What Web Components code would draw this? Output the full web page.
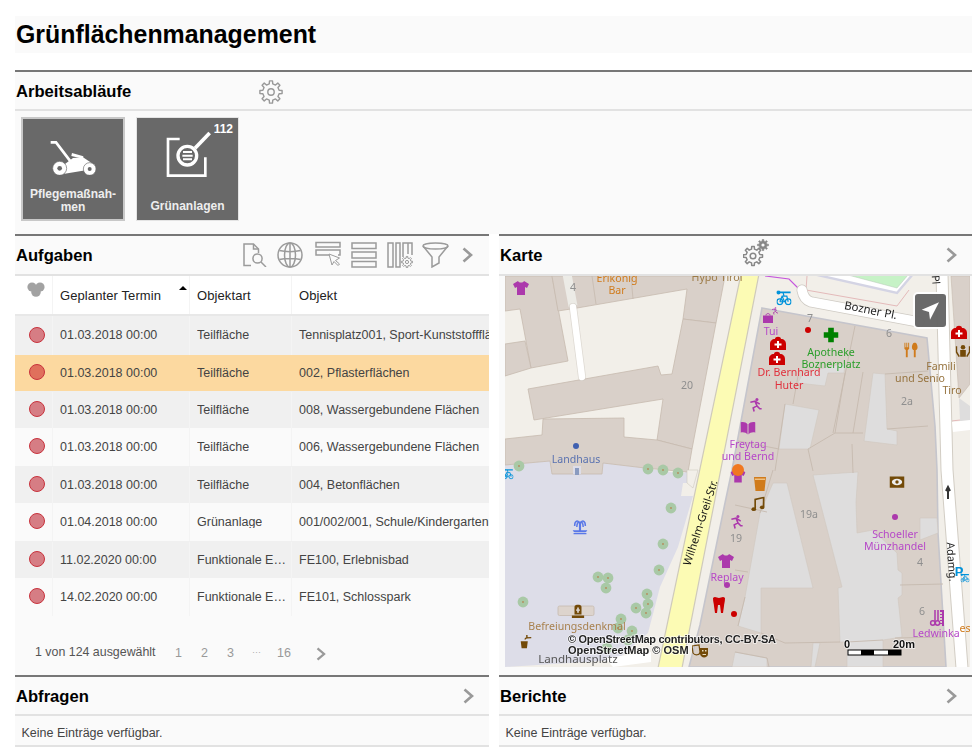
<!DOCTYPE html>
<html lang="de">
<head>
<meta charset="utf-8">
<title>Grünflächenmanagement</title>
<style>
html,body{margin:0;padding:0;background:#fff;font-family:"Liberation Sans",Arial,sans-serif}
body{width:976px;height:756px;overflow:hidden}
</style>
</head>
<body>
<gf-app></gf-app>
<script>
function gear(cx,cy,ro,ri,n){
  var p=[],step=Math.PI*2/n;
  for(var i=0;i<n;i++){
    var a=i*step-Math.PI/2;
    var w=step*.17,g=step*.27;
    [[ri,a-g],[ro,a-w],[ro,a+w],[ri,a+g]].forEach(function(q){
      p.push((cx+q[0]*Math.cos(q[1])).toFixed(2)+' '+(cy+q[0]*Math.sin(q[1])).toFixed(2));
    });
  }
  return 'M'+p.join('L')+'Z';
}
function def(name,css,html,init){
  customElements.define(name,class extends HTMLElement{
    connectedCallback(){
      if(this.shadowRoot)return;
      var r=this.attachShadow({mode:'open'});
      var h=typeof html==='function'?html(this):html;
      r.innerHTML='<style>'+css+'</style>'+h;
      if(init)init(r,this);
    }
  });
}
var CHEV='<svg width="11" height="16" viewBox="0 0 11 16"><path d="M1.5 1.5 9 8 1.5 14.5" fill="none" stroke="#999" stroke-width="2.6"/></svg>';

def('gf-title',
 ':host{display:block;height:37px;margin:16px 4px 17px 15px;background:#fafafa}h1{margin:0;padding-left:1px;font:bold 24.9px/37px "Liberation Sans",sans-serif;color:#000}',
 '<h1><slot></slot></h1>');

def('gf-panel',
 ':host{display:block;border-top:2px solid #777;background:#fafafa;box-sizing:border-box}'+
 'header{display:flex;align-items:center;box-sizing:content-box;height:var(--head,37px);border-bottom:2px solid #e2e2e2}'+
 'h2{margin:0;flex:none;box-sizing:border-box;padding:3px 0 0 1px;width:var(--tw,244px);font:bold 16.6px/1 "Liberation Sans",sans-serif;color:#000}'+
 '.a{display:flex;flex:1;align-items:center;height:100%}',
 function(el){return '<header><h2>'+el.getAttribute('heading')+'</h2><div class="a"><slot name="actions"></slot></div></header><slot></slot>';});

def('gf-chevron',':host{display:block;margin-left:auto;margin-right:15px;height:16px;line-height:0}',CHEV);

def('gf-gear',':host{display:block;line-height:0}',function(){
  return '<svg width="26" height="26" viewBox="0 0 26 26"><path d="'+gear(12,14,11.2,8.3,8)+'" fill="none" stroke="#999" stroke-width="1.4" stroke-linejoin="round"/><circle cx="12" cy="14" r="3.2" fill="none" stroke="#999" stroke-width="1.4"/></svg>';});

def('gf-gear2',':host{display:block;line-height:0;margin-top:-5px}',function(){
  return '<svg width="28" height="28" viewBox="0 0 28 28"><path d="'+gear(10,17,9.6,7,8)+'" fill="none" stroke="#888" stroke-width="1.5" stroke-linejoin="round"/><circle cx="10" cy="17" r="2.8" fill="none" stroke="#888" stroke-width="1.5"/><path d="'+gear(20,6,5.6,4,8)+'" fill="#888" stroke="#888" stroke-width=".6" stroke-linejoin="round"/><circle cx="20" cy="6" r="1.6" fill="#fafafa"/></svg>';});

def('gf-tile',
 ':host{display:flex;position:relative;flex:none;flex-direction:column;align-items:center;box-sizing:border-box;width:104px;height:104px;background:#696969;border:2px solid #c8c8c8;color:#eee;font:bold 12px/13px "Liberation Sans",sans-serif;text-align:center}'+
 '.i{height:65px;display:flex;align-items:flex-end;justify-content:center;line-height:0}'+
 '.t{margin-top:4px;height:26px;display:flex;flex-direction:column;justify-content:flex-end;width:100%}'+
 '.b{position:absolute;right:5px;top:4px;color:#fff;font:bold 12px/14px "Liberation Sans",sans-serif}',
 function(el){var b=el.getAttribute('badge');return '<div class="i"><slot name="icon"></slot></div><div class="t"><slot></slot></div>'+(b?'<div class="b">'+b+'</div>':'');});

def('gf-tiles',':host{display:flex;gap:11px;padding:6px 0 0 6px;height:117px;box-sizing:border-box}','<slot></slot>');

def('gf-tool-icons',':host{display:flex;flex:1;align-items:center;height:24px}svg{display:block;flex:none;fill:none;stroke:#9b9b9b;stroke-width:1.5}.c{margin-left:auto;margin-right:16px;stroke:#999;stroke-width:2.6;margin-top:0}',
 function(){return ''+
 '<svg width="24" height="24" viewBox="0 0 24 24" style="margin-right:11px"><path d="M8 22.5H1V1H10.5L15.5 6V10"/><path d="M10.5 1V6H15.5"/><circle cx="14.5" cy="15.5" r="4.6"/><path d="M18 19 23 24"/></svg>'+
 '<svg width="26" height="26" viewBox="0 0 26 26" style="margin-right:12px;margin-left:-1px"><circle cx="13" cy="13" r="12"/><ellipse cx="13" cy="13" rx="5.5" ry="12"/><path d="M13 1V25M2.5 8.5C8 10 18 10 23.5 8.5M2.5 17.5C8 16 18 16 23.5 17.5"/></svg>'+
 '<svg width="26" height="26" viewBox="0 0 26 26" style="margin-right:10px;margin-top:-2px"><rect x="1" y="1.5" width="24" height="4.5"/><path d="M14 14H1V9H25V14H23"/><path d="M14 13 17 24 19 20.5 23 24.5 24.5 23 20.5 19.5 24.5 17Z" stroke-width="1"/></svg>'+
 '<svg width="26" height="26" viewBox="0 0 26 26" style="margin-right:10px"><rect x="1" y="1" width="24" height="5.5"/><rect x="1" y="10" width="24" height="6"/><rect x="1" y="19.5" width="24" height="5.5"/></svg>'+
 '<svg width="26" height="26" viewBox="0 0 26 26" style="margin-right:9px"><path d="M1 1H6V25H1ZM9 1H13V25H9ZM16 15V1H25V13"/><path d="M21 1V12" /><path d="'+gear(20,20,5.6,4,8)+'" stroke-width="1"/><circle cx="20" cy="20" r="1.6" stroke-width="1"/></svg>'+
 '<svg width="27" height="26" viewBox="0 0 27 26"><ellipse cx="13.5" cy="4" rx="12.5" ry="3"/><path d="M1 4 10 15V25L17 21V15L26 4"/></svg>'+
 '<svg class="c" width="11" height="16" viewBox="0 0 11 16"><path d="M1.5 1.5 9 8 1.5 14.5"/></svg>';});

def('gf-columns',':host{display:grid;grid-template-columns:474px 473px;column-gap:10px;margin:0 4px 0 15px}','<slot></slot>');

var rows=[
 ['01.03.2018 00:00','Teilfläche','Tennisplatz001, Sport-Kunststofffläche',39],
 ['01.03.2018 00:00','Teilfläche','002, Pflasterflächen',36],
 ['01.03.2018 00:00','Teilfläche','008, Wassergebundene Flächen',37,1],
 ['01.03.2018 00:00','Teilfläche','006, Wassergebundene Flächen',38],
 ['01.03.2018 00:00','Teilfläche','004, Betonflächen',37,1],
 ['01.04.2018 00:00','Grünanlage','001/002/001, Schule/Kindergarten, Anlage',38],
 ['11.02.2020 00:00','Funktionale Einheit','FE100, Erlebnisbad',37,1],
 ['14.02.2020 00:00','Funktionale Einheit','FE101, Schlosspark',38]
];
def('gf-tasks',
 ':host{display:block;overflow:hidden;height:340px;font:12.5px/1 "Liberation Sans",sans-serif;color:#444}'+
 '.r{display:grid;grid-template-columns:38px 137px 102px 197px;width:474px;box-sizing:border-box}'+
 '.h{height:40px;box-sizing:border-box;border-bottom:2px solid #e8e8e8;color:#222;background:#fff;font-size:13px;letter-spacing:.1px}'+
 '.c{display:flex;align-items:center;padding:0 3px 0 7px;min-width:0;box-sizing:border-box;border-right:1px solid #f4f4f4;overflow:hidden;white-space:nowrap}'+
 '.c:first-child{padding:0;justify-content:center}.c:last-child{border:0;overflow:visible}'+
 '.t{display:block;overflow:hidden;text-overflow:ellipsis}'+
 '.o{background:#f0f0f0}.e{background:#fafafa}.s{background:#fcd9a0}.s .c{border-color:#fcd9a0}'+
 '.d{width:14px;height:14px;border-radius:50%;background:#d67d84;border:1.5px solid #c8323c;box-sizing:content-box;margin-left:6px}'+
 '.s .d{background:#e0705c}.sh{position:relative}'+
 '.ar{position:absolute;right:2px;top:10px;width:0;height:0;border:4.5px solid transparent;border-top:0;border-bottom:4px solid #000}',
 function(){
  var h='<div class="r h"><div class="c"><svg width="20" height="20" viewBox="0 0 20 20" style="margin:-11px 0 0 5px"><g fill="#666" opacity=".6"><circle cx="6" cy="7" r="4.6"/><circle cx="14" cy="7" r="4.6"/><circle cx="10" cy="12" r="4.8"/></g></svg></div><div class="c sh">Geplanter Termin<span class="ar"></span></div><div class="c">Objektart</div><div class="c">Objekt</div></div>';
  rows.forEach(function(r,i){
    var cl=i===1?'s':(i%2===0?'o':'e');
    h+='<div class="r '+cl+'" style="height:'+r[3]+'px'+(r[4]?';padding-top:1px':'')+'"><div class="c"><span class="d" style="margin-top:-2px"></span></div><div class="c">'+r[0]+'</div><div class="c"><span class="t">'+r[1]+'</span></div><div class="c">'+r[2]+'</div></div>';
  });
  return h;
 });

def('gf-pager',
 ':host{display:flex;align-items:center;height:59px;padding:13px 0 0 20px;box-sizing:border-box;font:12.4px/1 "Liberation Sans",sans-serif;color:#555}'+
 '.m{width:136px;flex:none}.n{display:flex;align-items:center;color:#999;font-size:12.5px}.n span{display:block;width:26px;flex:none}',
 function(){return '<span class="m"><slot></slot></span><div class="n"><span style="margin-left:4px;margin-top:2px">1</span><span style="margin-top:2px">2</span><span style="margin-top:2px;width:25px">3</span><span style="width:25px;font-size:9px;color:#aaa">···</span><span style="width:39px;margin-top:2px">16</span><div style="line-height:0;margin-top:3px">'+CHEV.replace('width="11" height="16"','width="10" height="14"')+'</div></div>';});

def('gf-empty',':host{display:block;height:29px;padding-left:6.5px;font:12.5px/34px "Liberation Sans",sans-serif;color:#444;white-space:nowrap}','<slot></slot>');

def('gf-navbutton',
 ':host{position:absolute;left:408px;top:16px;width:35px;height:37px;box-sizing:border-box;background:#666;border:2px solid #fff;border-radius:5px;display:block;line-height:0;opacity:.97}',
 '<svg width="31" height="33" viewBox="0 0 31 33"><path d="M6.7 15.7 24 8.3 15 25.7 14 18Z" fill="#fff"/></svg>');

var TREES=[[14,190],[143,193],[158,194],[173,197],[166,232],[158,268],[154,294],[93,301],[103,302],[101,312],[142,318],[143,328],[131,332],[141,337],[18,326],[116,343],[127,355],[113,352],[102,372],[123,364]];
function icon(id,x,y,s,c){return '<use href="#'+id+'" x="'+(x-s/2)+'" y="'+(y-s/2)+'" width="'+s+'" height="'+s+'" style="color:'+c+'"/>';}
function lab(t,x,y,c,extra){return '<text x="'+x+'" y="'+y+'" fill="'+c+'" '+(extra||'text-anchor="middle"')+'>'+t+'</text>';}

def('gf-map',
 ':host{display:block;position:relative;width:465px;height:391px;margin-left:6px;overflow:hidden}'+
 'svg.m{display:block;filter:blur(.36px)}'+
 'text{font-family:"Noto Sans","DejaVu Sans",sans-serif;font-size:10.6px}'+
 '.nb{stroke:none}.a{font-family:"Liberation Sans",sans-serif;font-weight:bold;font-size:11px;paint-order:stroke;stroke:rgba(255,255,255,.7);stroke-width:1.6px}',
 function(){
  var B='#d9d0c9',L='#c6baaf',P='#ac39ac',R='#cc0000',BR='#734a08',O='#d07b1c';
  var s='<svg class="m" width="465" height="391" viewBox="0 0 465 391"><defs>'+
  '<symbol id="shirt" viewBox="0 0 16 14"><path fill="currentColor" d="M5 0 0 3 2 7 4 6V14H12V6L14 7 16 3 11 0C10 2 6 2 5 0Z"/></symbol>'+
  '<symbol id="kit" viewBox="0 0 16 14"><path fill="currentColor" d="M5 3C5 0 11 0 11 3 14 3 16 5 16 8V14H0V8C0 5 2 3 5 3Z"/><path fill="#fff" d="M7 5H9V7.5H11.5V9.5H9V12H7V9.5H4.5V7.5H7Z"/></symbol>'+
  '<symbol id="plus" viewBox="0 0 16 16"><path fill="currentColor" d="M5 0H11V5H16V11H11V16H5V11H0V5H5Z"/></symbol>'+
  '<symbol id="bike" viewBox="0 0 16 16" fill="none" stroke="currentColor" stroke-width="1.3"><circle cx="3.5" cy="12" r="3"/><circle cx="12.5" cy="12" r="3"/><path d="M3.5 12 6 6H11L12.5 12M6 6 8.5 12H3.5M8 6 7 2"/><path d="M1 2H15" stroke-width="2"/><circle cx="2" cy="2" r="1.6" fill="currentColor"/></symbol>'+
  '<symbol id="run" viewBox="0 0 14 16"><circle cx="8" cy="2" r="1.6" fill="currentColor"/><path fill="none" stroke="currentColor" stroke-width="1.7" d="M1 5 6 4 8 9 4 11 5 15M8 9 11 12H13M6 4 11 7"/></symbol>'+
  '<symbol id="book" viewBox="0 0 16 14"><path fill="currentColor" d="M0 1C3 0 6 1 7.5 3V14C6 12 3 11 0 12ZM16 1C13 0 10 1 8.5 3V14C10 12 13 11 16 12Z"/></symbol>'+
  '<symbol id="fork" viewBox="0 0 14 16"><path fill="currentColor" d="M0 0H1V5H2V0H3V5H4V0H5V7L3.5 8V16H1.5V8L0 7ZM11 0C13 0 14 3 14 5 14 7 13 8 12 8V16H10V8C9 8 8 7 8 5 8 3 9 0 11 0Z"/></symbol>'+
  '<symbol id="cup" viewBox="0 0 12 14"><path fill="currentColor" d="M0 0H12L10.5 14H1.5Z"/><path fill="#f0c080" d="M1 1.5H11V3H1Z"/></symbol>'+
  '<symbol id="note" viewBox="0 0 14 16"><path fill="none" stroke="currentColor" stroke-width="1.8" d="M4 13V3L13 1V11"/><ellipse cx="2.5" cy="13.5" rx="2.5" ry="2" fill="currentColor"/><ellipse cx="11.5" cy="11.5" rx="2.5" ry="2" fill="currentColor"/></symbol>'+
  '<symbol id="cine" viewBox="0 0 16 12"><path fill="currentColor" d="M0 0H16V12H0Z"/><ellipse cx="8" cy="6" rx="5.5" ry="3.4" fill="#eee"/><circle cx="8" cy="6" r="1.8" fill="currentColor"/></symbol>'+
  '<symbol id="fountain" viewBox="0 0 14 14"><path fill="currentColor" d="M6 3H8V10H6ZM0 10H14C13 12 11 12 10 12H4C3 12 1 12 0 10ZM1 12.5H13V14H1Z"/><path fill="none" stroke="currentColor" stroke-width="1.4" d="M7 4C5 0 2 1 2 6M7 4C9 0 12 1 12 6M7 3C6 1 4 3 4 7M7 3C8 1 10 3 10 7"/></symbol>'+
  '<symbol id="tooth" viewBox="0 0 12 16"><path fill="currentColor" d="M0 1C2-1 4 1 6 1S10-1 12 1C12 5 11 7 11 9L10 16H8L7 8H5L4 16H2L1 9C1 7 0 5 0 1Z"/></symbol>'+
  '<symbol id="stone" viewBox="0 0 14 16"><path fill="currentColor" d="M3 3C3 0 11 0 11 3V12H3ZM0 13H14V16H0Z"/><path fill="#d9d0c9" d="M5 6H9V8H5ZM6 4H8V10H6Z"/></symbol>'+
  '<symbol id="tap" viewBox="0 0 14 16"><path fill="currentColor" d="M1 7H9L8 15H2Z"/><path fill="none" stroke="currentColor" stroke-width="1.6" d="M6 5C6 3 8 3 13 3M8 0V3"/></symbol>'+
  '<symbol id="mask" viewBox="0 0 16 14"><path fill="none" stroke="currentColor" stroke-width="1.2" d="M0 1 7 0 8 7C8 10 3 11 1 8Z"/><path fill="currentColor" d="M8 3 16 3V9C16 13 9 14 8 9Z"/><path fill="#e8dcc0" d="M10 5H11.5V6.5H10ZM13 5H14.5V6.5H13ZM10.5 9H14V10H10.5Z"/></symbol>'+
  '<symbol id="comb" viewBox="0 0 14 16"><path fill="none" stroke="currentColor" stroke-width="1.5" d="M5 0V11M8 0V11"/><circle cx="2.8" cy="13" r="2.2" fill="none" stroke="currentColor" stroke-width="1.5"/><circle cx="7.5" cy="13" r="2.2" fill="none" stroke="currentColor" stroke-width="1.5"/><path fill="currentColor" d="M10 0H14V16H12V14H10V13H12V11H10V10H12V8H10V7H12V5H10V4H12V2H10Z"/></symbol>'+
  '<symbol id="bag" viewBox="0 0 12 12"><path fill="currentColor" d="M0 3H12V12H0Z"/><path fill="none" stroke="currentColor" stroke-width="1.2" d="M3.5 3C3.5 0 8.5 0 8.5 3"/></symbol>'+
  '<symbol id="family" viewBox="0 0 16 14"><circle cx="8" cy="3" r="2.4" fill="currentColor"/><path fill="currentColor" d="M5 6H11V13H5Z"/><path fill="none" stroke="currentColor" stroke-width="1.6" d="M1 2V8L4 13M15 2V8L12 13"/></symbol>'+
  '</defs>'+
  '<rect width="465" height="391" fill="#f2efe9"/>';

  s+='<path fill="#dddde8" d="M0 189 45 185 47 198H97L98 187 140 192 178 198 182 194V207H178L176 220H188L173 271 155 311 143 357 112 384 0 391Z"/>';
  s+='<path fill="#fff" d="M100 382 146 376 146 386 108 391Z"/>';

  var st=' fill="'+B+'" stroke="'+L+'" stroke-width=".8"';
  s+='<path'+st+' d="M0 0H47L63 85 26 92 15 33 0 35Z"/>';
  s+='<path'+st+' d="M0 68 20 65 26 92 0 100Z"/>';
  s+='<path'+st+' d="M47 0H220L211 47 178 43 182 13 72 32 53 35Z"/>';
  s+='<path'+st+' d="M178 43 211 47 187 173 152 164 158 123 29 144 23 113 153 90 156 99 167 98Z"/>';
  s+='<path'+st+' d="M0 163 37 159 38 143 119 142 119 161 152 164 187 173 183 196 140 192 98 187 97 198H47L45 185 0 189Z"/>';
  s+='<path fill="none" stroke="'+L+'" stroke-width=".8" d="M87 0 91 28M126 0 128 23"/>';
  s+='<path d="M62 -2 68 30" stroke="#ecebe6" stroke-width="9" fill="none"/><path d="M68 31 77 101" stroke="#c9c4bb" stroke-width="8" stroke-linecap="round" fill="none" opacity=".5"/><path d="M68 31 77 101" stroke="#fff" stroke-width="6.5" stroke-linecap="round" fill="none"/>';
  s+='<path d="M182 194 193 194 188 212 182 207Z" fill="#f2efe9" stroke="#cfcac0" stroke-width=".6"/>';

  s+='<path fill="none" stroke="#e4baba" stroke-width="1" d="M302 0 301 14 392 30 404 14M458 145H465M446 145 465 143"/>';
  s+='<path fill="#fff" stroke="#d4d4e4" stroke-width="2.4" d="M308 -2 392 17 408 -2Z"/>';
  s+='<path fill="#c6f2c6" stroke="#b6c9b6" stroke-width=".5" d="M343 -1 392 12 403 -1Z"/>';
  s+='<path fill="none" stroke="#c555dd" stroke-width="1.2" d="M260 0 284 3 296 15"/>';

  s+='<path d="M297 14C298 20 300 24 306 26L414 46" fill="none" stroke="#cfcbc4" stroke-width="11" stroke-linecap="round"/>';
  s+='<path d="M297 14C298 20 300 24 306 26L414 46" fill="none" stroke="#fff" stroke-width="9.5" stroke-linecap="round"/>';

  s+='<path fill="'+B+'" stroke="#c5c5cc" stroke-width="1.6" d="M257 32 422 62 430 150 432 194 433 257 436 307 441 391H184L195 349 220 227 227 194Z"/>';
  var gp=' fill="#dedddd" stroke="#d0c8c0" stroke-width=".6"';
  s+='<path'+gp+' d="M280 128 314 134 305 173 274 173Z"/>';
  s+='<path'+gp+' d="M368 97 380 98 382 153 392 155 392 169 359 165Z"/>';
  s+='<path'+gp+' d="M298 97 340 87 339 97 323 97 320 110 293 107Z"/>';
  s+='<path'+gp+' d="M282 207 308 312H256V357L233 350 240 321 255 237 268 207Z"/>';
  s+='<path'+gp+' d="M308 199 353 196 351 226 352 257 368 254 392 277 393 294 397 297 397 319 393 322 395 341 397 361 378 364V391H342V366L335 366 333 312 337 311Z"/>';
  s+='<path'+gp+' d="M415 242 432 242 433 257 415 264Z"/>';
  s+='<path'+gp+' d="M308 367 315 367 310 391H306Z"/>';
  s+='<path'+gp+' d="M230 376 262 382V391H227Z"/>';
  s+='<path fill="none" stroke="'+L+'" stroke-width=".9" d="M350 50 328 157M358 96 348 157M330 157H358M340 97 330 157M380 98 423 95M382 153 423 150M280 128 270 195M274 173 233 165M303 173 308 195M347 168 348 197M330 157 303 173M288 128 293 100M230 229 262 236M255 237 268 194M230 294 243 296M395 309 438 308M390 362 440 361M256 357 280 367 335 366M230 376 262 382M262 382 264 391M342 366 378 364M240 321 233 350"/>';

  s+='<path d="M437 -2 442 194 457 392" fill="none" stroke="#d2cdc4" stroke-width="13"/><path d="M437 -2 442 194 457 392" fill="none" stroke="#fff" stroke-width="11"/>';
  s+='<path fill="'+B+'" stroke="'+L+'" stroke-width=".6" d="M446 0H465V108L454 122Z"/><path fill="#dedddd" d="M454 122 465 130V145H455Z"/><path fill="#fff" d="M447 146 465 144V154L448 156Z"/>';

  s+='<path d="M236 -2 153 392H177L254 -2Z" fill="#fcfbb4" stroke="#cfcabb" stroke-width="1.2"/>';

  TREES.forEach(function(t){s+='<circle cx="'+t[0]+'" cy="'+t[1]+'" r="5.4" fill="#a9c9a6"/><circle cx="'+t[0]+'" cy="'+t[1]+'" r=".9" fill="#b58a5a"/>';});

  s+='<rect x="53" y="330" width="36" height="9.5" rx="1.5" fill="#ddd4cd" stroke="#c6baaf" stroke-width=".8"/>';
  s+='<rect x="68" y="190" width="8" height="8" fill="#dddde8"/><path d="M70 192H74V199H70Z" fill="#8a9bc0"/>';

  s+=icon('shirt',16,12,16,P)+icon('shirt',221,285,16,P)+icon('shirt',233,200,15,P);
  s+='<circle cx="233" cy="194" r="6" fill="#f07820"/>';
  s+=icon('kit',273,67,16,R)+icon('kit',272,82,16,R)+icon('kit',454,56,16,R);
  s+=icon('plus',326,59,15,'#008000');
  s+='<circle cx="303" cy="54" r="3" fill="'+R+'"/><circle cx="229" cy="338" r="3" fill="'+R+'"/><circle cx="390" cy="241" r="3" fill="'+P+'"/><circle cx="222" cy="309" r="3" fill="'+P+'"/><circle cx="71" cy="170" r="3" fill="#4060b0"/>';
  s+=icon('bike',279,22,15,'#0092da')+icon('bike',3,198,11,'#0092da')+icon('bag',263,42,10,P)+icon('run',270,35,8,P);
  s+=icon('run',251,129,15,P)+icon('run',232,246,15,P)+icon('book',243,152,15,P);
  s+=icon('fork',406,74,15,O)+icon('family',458,75,15,BR)+icon('cup',255,208,14,O)+icon('note',253,228,15,BR);
  s+=icon('cine',392,206,15,BR)+icon('fountain',75,251,15,'#5a78e8')+icon('tooth',214,329,16,R)+icon('stone',73,335,14,BR);
  s+=icon('tap',21,366,14,BR)+icon('mask',195,376,16,BR)+icon('comb',432,342,16,P);
  s+='<path d="M443 212V223M441 215 443 211 445 215" stroke="#333" stroke-width="2" fill="none"/>';
  s+='<text x="454" y="300" class="nb" text-anchor="middle" fill="#0092da" style="font:bold 13px \'Liberation Sans\'">P</text>'+icon('bike',460,302,9,'#0092da');

  s+=lab('Erlkönig',112,6,O)+lab('Bar',112,18,O)+lab('Hypo Tirol',212,5,'#9c7a45');
  var g='#8f8f8f';
  s+=lab('4',68,15,g)+lab('20',182,113,g)+lab('7',305,46,g)+lab('6',384,61,g)+lab('2a',402,129,g)+lab('19',231,266,g)+lab('19a',304,242,g)+lab('4',415,290,g)+lab('6',417,339,g);
  s+=lab('Tui',266,59,'#b648c8')+lab('Apotheke',326,80,'#2a9e2a')+lab('Boznerplatz',326,92,'#2a9e2a');
  s+=lab('Dr. Bernhard',284,100,'#e0303c')+lab('Huter',284,113,'#e0303c');
  s+=lab('Freytag',243,172,'#b648c8')+lab('und Bernd',243,184,'#b648c8')+lab('Landhaus',71,187,'#5a72b0');
  var f='#96733e';
  s+=lab('Famili',436,94,f,'')+lab('und Senio',415,106,f,'')+lab('Tiro',447,118,f,'');
  s+=lab('Schoeller',390,262,'#b648c8')+lab('Münzhandel',390,274,'#b648c8')+lab('Replay',222,305,'#b648c8')+lab('Ledwinka',431,361,'#b648c8')+lab('es',460,356,O);
  s+=lab('Befreiungsdenkmal',72,354,'#a8814e');
  s+='<text x="73" y="387" fill="#555" text-anchor="middle" style="font-size:11.6px">Landhausplatz</text>';
  s+='<text transform="translate(365 38) rotate(11)" text-anchor="middle" fill="#222" style="font-size:11.4px">Bozner Pl.</text>';
  s+='<text transform="translate(427 4) rotate(86)" text-anchor="middle" fill="#222">Pl</text>';
  s+='<text transform="translate(199 248) rotate(-72)" text-anchor="middle" fill="#111" style="font-size:11px">Wilhelm-Greil-Str.</text>';
  s+='<text transform="translate(443 286) rotate(86)" text-anchor="middle" fill="#222" style="font-size:10.8px">Adamg.</text>';

  s+='<text class="a" x="63" y="367" fill="#222" textLength="208" lengthAdjust="spacing">© OpenStreetMap contributors, CC-BY-SA</text>';
  s+='<text class="a" x="63" y="378" fill="#222">OpenStreetMap © OSM</text>';
  s+='<text class="a" x="339" y="372" fill="#111">0</text><text class="a" x="388" y="372" fill="#111">20m</text>';
  s+='<rect x="343" y="374" width="53" height="5" fill="#fff" stroke="#000" stroke-width="1"/><rect x="356" y="374" width="13" height="5" fill="#000"/><rect x="383" y="374" width="13" height="5" fill="#000"/>';
  s+='</svg><slot></slot>';
  return s;
 });

def('gf-app',':host{display:block}',`
<gf-title>Grünflächenmanagement</gf-title>
<gf-panel heading="Arbeitsabläufe" style="margin:0 4px 0 15px;height:164px">
  <gf-gear slot="actions"></gf-gear>
  <gf-tiles>
    <gf-tile>
      <svg slot="icon" width="50" height="35" viewBox="100 85 150 105" style="margin-bottom:9px"><path d="M108 92H124L172 155" fill="none" stroke="#fff" stroke-width="8"/><path d="M150 158 175 139 205 137 240 160 236 172 150 186Z" fill="#fff"/><path d="M172 124 206 134 205 141 170 133Z" fill="#fff"/><circle cx="135" cy="170" r="21" fill="#fff" stroke="#696969" stroke-width="2"/><circle cx="135" cy="170" r="7" fill="#696969"/><circle cx="225" cy="172" r="19" fill="#fff" stroke="#696969" stroke-width="2"/><circle cx="225" cy="172" r="6" fill="#696969"/></svg>
      <div>Pflegemaßnah-</div><div>men</div>
    </gf-tile>
    <gf-tile badge="112" style="border:1px solid #e4e4e4;width:103px">
      <svg slot="icon" width="50" height="50" viewBox="445 60 150 150" fill="none" stroke="#fff" stroke-width="8" style="margin-bottom:4px"><path d="M495 90H460V200H572V145"/><circle cx="518" cy="140" r="28" stroke-width="10"/><path d="M541 118 585 72" stroke-width="11"/><path d="M505 129H532M503 140H534M505 151H532" stroke-width="6"/></svg>
      <div>Grünanlagen</div>
    </gf-tile>
  </gf-tiles>
</gf-panel>
<gf-columns>
  <gf-panel heading="Aufgaben" style="height:441px;--head:38px;--tw:228px">
    <gf-tool-icons slot="actions"></gf-tool-icons>
    <gf-tasks></gf-tasks>
    <gf-pager>1 von 124 ausgewählt</gf-pager>
  </gf-panel>
  <gf-panel heading="Karte" style="height:441px;--head:38px">
    <gf-gear2 slot="actions"></gf-gear2>
    <gf-chevron slot="actions"></gf-chevron>
    <gf-map><gf-navbutton></gf-navbutton></gf-map>
  </gf-panel>
  <gf-panel heading="Abfragen" style="border-bottom:2px solid #e2e2e2">
    <gf-chevron slot="actions"></gf-chevron>
    <gf-empty>Keine Einträge verfügbar.</gf-empty>
  </gf-panel>
  <gf-panel heading="Berichte" style="border-bottom:2px solid #e2e2e2">
    <gf-chevron slot="actions"></gf-chevron>
    <gf-empty>Keine Einträge verfügbar.</gf-empty>
  </gf-panel>
</gf-columns>`);
</script>
</body>
</html>
